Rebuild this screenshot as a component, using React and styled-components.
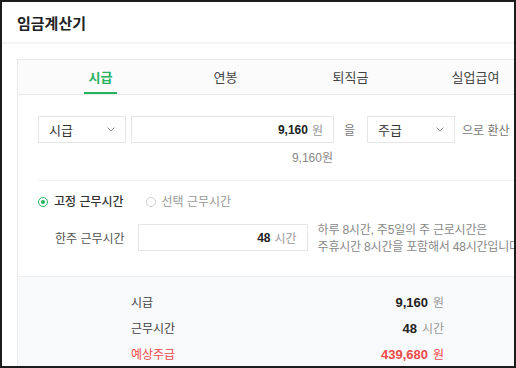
import React from 'react';
import styled, { createGlobalStyle } from 'styled-components';

const GREEN = '#22b35c';
const RED = '#ef4a4a';

const GlobalStyle = createGlobalStyle`
  html, body {
    margin: 0;
    padding: 0;
    background: #fff;
  }
  body {
    font-family: "Liberation Sans", "Noto Sans CJK KR", sans-serif;
    color: #333;
  }
`;

const Frame = styled.div`
  width: 516px;
  height: 368px;
  box-sizing: border-box;
  border: 2px solid #1c1c1c;
  overflow: hidden;
  background: #fff;
`;

const Header = styled.div`
  height: 40px;
  display: flex;
  align-items: center;
  padding-left: 15px;
  font-size: 15px;
  font-weight: 700;
  color: #222;
  border-bottom: 2px solid #f4f4f4;
`;

const Content = styled.div`
  padding: 15px 0 0 15px;
`;

const Card = styled.div`
  width: 580px;
  border: 1px solid #e9e9e9;
  background: #fff;
`;

const TabBar = styled.div`
  display: flex;
  height: 34px;
  padding-left: 20px;
  background: #fbfbfc;
  border-bottom: 1px solid #e9e9e9;
`;

const Tab = styled.div`
  width: 125px;
  display: flex;
  justify-content: center;
`;

const TabLabel = styled.span`
  display: flex;
  align-items: center;
  padding: 0 5px;
  font-size: 13px;
  font-weight: ${(p) => (p.active ? 700 : 400)};
  color: ${(p) => (p.active ? GREEN : '#444')};
  border-bottom: 2px solid ${(p) => (p.active ? GREEN : 'transparent')};
`;

const Body = styled.div`
  padding: 21px 0 25px 20px;
`;

const Row = styled.div`
  display: flex;
  align-items: center;
  height: 27px;
`;

const SelectBox = styled.div`
  width: 88px;
  height: 27px;
  box-sizing: border-box;
  border: 1px solid #e6e6e6;
  display: flex;
  align-items: center;
  justify-content: space-between;
  padding: 0 10px 0 10px;
  font-size: 13px;
  color: #333;
`;

const InputBox = styled.div`
  width: ${(p) => p.w}px;
  height: 27px;
  flex-shrink: 0;
  box-sizing: border-box;
  border: 1px solid #e6e6e6;
  display: flex;
  align-items: center;
  justify-content: flex-end;
  gap: 4px;
  padding-right: 10px;
  margin-left: ${(p) => p.ml || 0}px;
`;

const Num = styled.span`
  font-size: 12px;
  font-weight: 700;
  color: #222;
`;

const Unit = styled.span`
  font-size: 12px;
  color: #999;
`;

const Word = styled.span`
  font-size: 12px;
  color: #777;
  margin: ${(p) => p.m};
`;

const SubText = styled.div`
  width: 295px;
  text-align: right;
  margin-top: 7px;
  font-size: 12px;
  line-height: 16px;
  color: #888;
`;

const Divider = styled.div`
  height: 1px;
  background: #eee;
  margin-top: 14px;
`;

const RadioRow = styled.div`
  display: flex;
  align-items: center;
  height: 14px;
  margin-top: 14px;
`;

const RadioItem = styled.label`
  display: flex;
  align-items: center;
  gap: 6px;
  margin-right: 22px;
  font-size: 12px;
  line-height: 14px;
  font-weight: ${(p) => (p.checked ? 500 : 400)};
  color: ${(p) => (p.checked ? '#333' : '#999')};
`;

const RadioDot = styled.span`
  width: 10px;
  height: 10px;
  box-sizing: border-box;
  border-radius: 50%;
  border: 1px solid ${(p) => (p.checked ? GREEN : '#cfcfcf')};
  display: flex;
  align-items: center;
  justify-content: center;
  &::after {
    content: '';
    width: 4px;
    height: 4px;
    border-radius: 50%;
    background: ${(p) => (p.checked ? GREEN : 'transparent')};
  }
`;

const WorkRow = styled.div`
  display: flex;
  align-items: center;
  height: 27px;
  margin-top: 15px;
  padding-left: 17px;
`;

const FieldLabel = styled.span`
  font-size: 12px;
  color: #555;
  margin-right: 13px;
`;

const Helper = styled.div`
  margin: 2px 0 0 10px;
  font-size: 12px;
  line-height: 17px;
  color: #888;
  white-space: nowrap;
  letter-spacing: -0.2px;
`;

const Summary = styled.div`
  border-top: 1px solid #eee;
  background: #f8f9fa;
  padding: 11px 0 20px 113px;
`;

const SumRow = styled.div`
  width: 313px;
  height: 26px;
  display: flex;
  align-items: center;
  justify-content: space-between;
  font-size: 12px;
  color: ${(p) => (p.red ? RED : '#444')};
`;

const SumValue = styled.span`
  display: flex;
  align-items: baseline;
  gap: 5px;
`;

const SumNum = styled.span`
  font-size: 13px;
  font-weight: 700;
  color: ${(p) => (p.red ? RED : '#222')};
`;

const SumUnit = styled.span`
  font-size: 12px;
  color: ${(p) => (p.red ? RED : '#999')};
`;

const Chevron = () => (
  <svg width="8" height="5" viewBox="0 0 8 5" fill="none">
    <polyline points="0.5,0.5 4,4 7.5,0.5" stroke="#999" strokeWidth="1" />
  </svg>
);

const tabs = ['시급', '연봉', '퇴직금', '실업급여'];

const summary = [
  { label: '시급', num: '9,160', unit: '원' },
  { label: '근무시간', num: '48', unit: '시간' },
  { label: '예상주급', num: '439,680', unit: '원', red: true },
];

export default function App() {
  return (
    <>
      <GlobalStyle />
      <Frame>
        <Header>임금계산기</Header>
        <Content>
          <Card>
            <TabBar>
              {tabs.map((t, i) => (
                <Tab key={t}>
                  <TabLabel active={i === 0}>{t}</TabLabel>
                </Tab>
              ))}
            </TabBar>
            <Body>
              <Row>
                <SelectBox>
                  시급
                  <Chevron />
                </SelectBox>
                <InputBox w={203} ml={5}>
                  <Num>9,160</Num>
                  <Unit>원</Unit>
                </InputBox>
                <Word m="0 12px 0 10px">을</Word>
                <SelectBox>
                  주급
                  <Chevron />
                </SelectBox>
                <Word m="0 0 0 7px">으로 환산</Word>
              </Row>
              <SubText>9,160원</SubText>
              <Divider />
              <RadioRow>
                <RadioItem checked>
                  <RadioDot checked />
                  고정 근무시간
                </RadioItem>
                <RadioItem>
                  <RadioDot />
                  선택 근무시간
                </RadioItem>
              </RadioRow>
              <WorkRow>
                <FieldLabel>한주 근무시간</FieldLabel>
                <InputBox w={170}>
                  <Num>48</Num>
                  <Unit>시간</Unit>
                </InputBox>
                <Helper>
                  하루 8시간, 주5일의 주 근로시간은
                  <br />
                  주휴시간 8시간을 포함해서 48시간입니다.
                </Helper>
              </WorkRow>
            </Body>
            <Summary>
              {summary.map((s) => (
                <SumRow key={s.label} red={s.red}>
                  <span>{s.label}</span>
                  <SumValue>
                    <SumNum red={s.red}>{s.num}</SumNum>
                    <SumUnit red={s.red}>{s.unit}</SumUnit>
                  </SumValue>
                </SumRow>
              ))}
            </Summary>
          </Card>
        </Content>
      </Frame>
    </>
  );
}
